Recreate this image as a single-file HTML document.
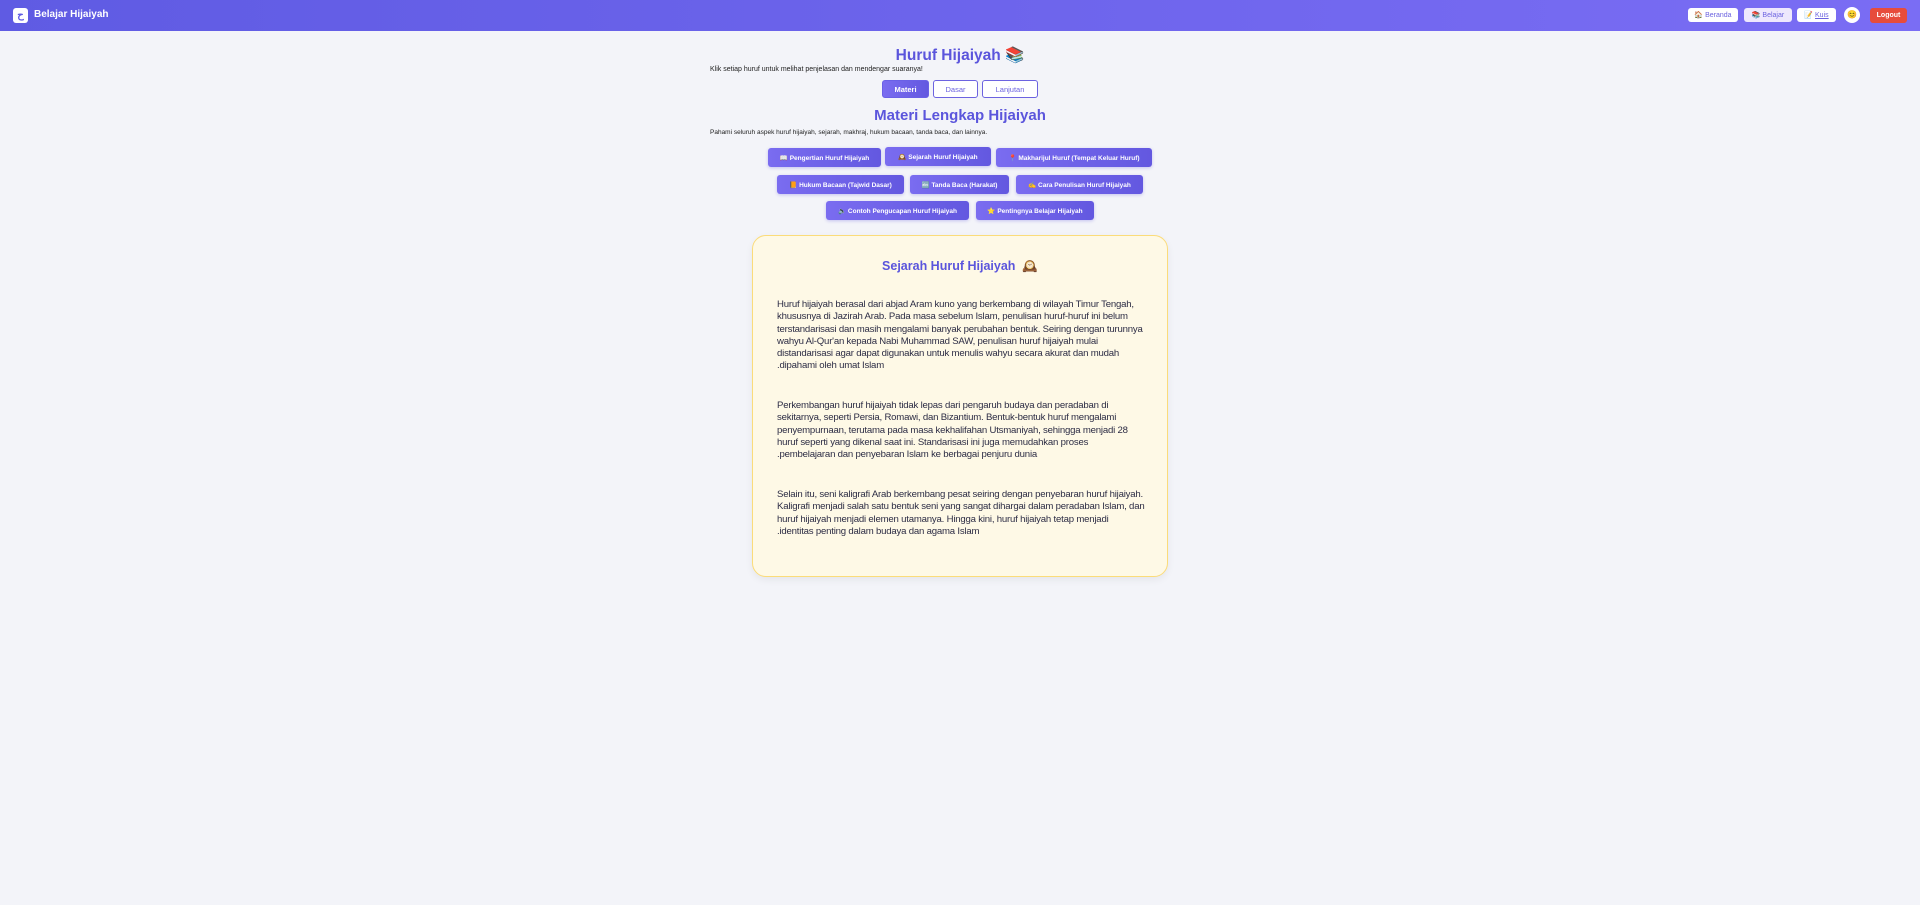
<!DOCTYPE html>
<html><head><meta charset="utf-8"><style>
*{margin:0;padding:0;box-sizing:border-box}
body{width:1920px;height:905px;background:#f3f4f9;font-family:"Liberation Sans",sans-serif;position:relative;overflow:hidden}
.hdr{position:absolute;left:0;top:0;width:1920px;height:31px;background:linear-gradient(90deg,#5f5be3,#7a6df4)}
.abs{position:absolute}
.nb{position:absolute;top:8px;height:14px;background:#fff;border-radius:3px;font-size:7px;color:#6c63e0;display:flex;align-items:center;justify-content:center;gap:3px}
.tab{position:absolute;top:80px;height:18px;border:1.5px solid #6c63e0;border-radius:3px;font-size:7.5px;color:#6c63e0;display:flex;align-items:center;justify-content:center;background:#fff}
.mb{position:absolute;height:19px;background:linear-gradient(90deg,#7a6cf0,#6358e0);border-radius:3px;color:#fff;font-size:6.5px;font-weight:bold;display:flex;align-items:center;justify-content:center;gap:8px;box-shadow:0 1px 3px rgba(90,80,220,.3)}
.card{position:absolute;left:752px;top:235px;width:416px;height:342px;background:#fef9e6;border:1.5px solid #fbdc7a;border-radius:14px;box-shadow:0 3px 8px rgba(0,0,0,.06)}
.p{position:absolute;left:777px;font-size:9.6px;line-height:12.3px;color:#2c2c44;white-space:nowrap;letter-spacing:-0.2px}
</style></head><body>
<div class="hdr"></div>
<div class="abs" style="left:13px;top:8px;width:15px;height:15px;background:#fff;border-radius:3px;color:#5f5be3;font-size:10px;text-align:center;line-height:15px;font-weight:bold">ح</div>
<div class="abs" style="left:34px;top:9px;color:#fff;font-size:10px;font-weight:bold">Belajar Hijaiyah</div>
<div class="nb" style="left:1688px;width:50px">🏠 Beranda</div>
<div class="nb" style="left:1744px;width:48px;background:#eee8fd">📚 Belajar</div>
<div class="nb" style="left:1797px;width:39px"><span>📝 <u>Kuis</u></span></div>
<div class="abs" style="left:1844px;top:7px;width:16px;height:16px;border-radius:50%;background:#fff;font-size:8px;text-align:center;line-height:16px">😊</div>
<div class="abs" style="left:1870px;top:8px;width:37px;height:15px;background:#e74c3c;border-radius:3px;color:#fff;font-size:7px;font-weight:bold;text-align:center;line-height:15px">Logout</div>

<div class="abs" style="left:0;width:1920px;top:46px;text-align:center;font-size:15.5px;font-weight:bold;color:#5b55dc">Huruf Hijaiyah 📚</div>
<div class="abs" style="left:710px;top:66px;font-size:7px;color:#222">Klik setiap huruf untuk melihat penjelasan dan mendengar suaranya!</div>
<div class="tab" style="left:882px;width:47px;background:linear-gradient(90deg,#7a6cf0,#6358e0);color:#fff;font-weight:bold;border-color:#6a60e6">Materi</div>
<div class="tab" style="left:933px;width:45px">Dasar</div>
<div class="tab" style="left:982px;width:56px">Lanjutan</div>
<div class="abs" style="left:0;width:1920px;top:107px;text-align:center;font-size:15px;font-weight:bold;color:#5b55dc">Materi Lengkap Hijaiyah</div>
<div class="abs" style="left:710px;top:129px;font-size:6.5px;color:#222">Pahami seluruh aspek huruf hijaiyah, sejarah, makhraj, hukum bacaan, tanda baca, dan lainnya.</div>

<div class="mb" style="left:768px;top:148px;width:113px">📖 Pengertian Huruf Hijaiyah</div>
<div class="mb" style="left:885px;top:147px;width:106px">🕰️ Sejarah Huruf Hijaiyah</div>
<div class="mb" style="left:996px;top:148px;width:156px">📍 Makharijul Huruf (Tempat Keluar Huruf)</div>
<div class="mb" style="left:777px;top:175px;width:127px">📙 Hukum Bacaan (Tajwid Dasar)</div>
<div class="mb" style="left:910px;top:175px;width:99px">🔤 Tanda Baca (Harakat)</div>
<div class="mb" style="left:1016px;top:175px;width:127px">✍️ Cara Penulisan Huruf Hijaiyah</div>
<div class="mb" style="left:826px;top:201px;width:143px">🔈 Contoh Pengucapan Huruf Hijaiyah</div>
<div class="mb" style="left:976px;top:201px;width:118px">⭐ Pentingnya Belajar Hijaiyah</div>

<div class="card"></div>
<div class="abs" style="left:752px;width:416px;top:259px;text-align:center;font-size:12.5px;font-weight:bold;color:#5b55dc">Sejarah Huruf Hijaiyah &nbsp;🕰️</div>
<div class="p" style="top:299px">Huruf hijaiyah berasal dari abjad Aram kuno yang berkembang di wilayah Timur Tengah,<br>khususnya di Jazirah Arab. Pada masa sebelum Islam, penulisan huruf-huruf ini belum<br>terstandarisasi dan masih mengalami banyak perubahan bentuk. Seiring dengan turunnya<br>wahyu Al-Qur'an kepada Nabi Muhammad SAW, penulisan huruf hijaiyah mulai<br>distandarisasi agar dapat digunakan untuk menulis wahyu secara akurat dan mudah<br>.dipahami oleh umat Islam</div>
<div class="p" style="top:400px">Perkembangan huruf hijaiyah tidak lepas dari pengaruh budaya dan peradaban di<br>sekitarnya, seperti Persia, Romawi, dan Bizantium. Bentuk-bentuk huruf mengalami<br>penyempurnaan, terutama pada masa kekhalifahan Utsmaniyah, sehingga menjadi 28<br>huruf seperti yang dikenal saat ini. Standarisasi ini juga memudahkan proses<br>.pembelajaran dan penyebaran Islam ke berbagai penjuru dunia</div>
<div class="p" style="top:489px">Selain itu, seni kaligrafi Arab berkembang pesat seiring dengan penyebaran huruf hijaiyah.<br>Kaligrafi menjadi salah satu bentuk seni yang sangat dihargai dalam peradaban Islam, dan<br>huruf hijaiyah menjadi elemen utamanya. Hingga kini, huruf hijaiyah tetap menjadi<br>.identitas penting dalam budaya dan agama Islam</div>
</body></html>
